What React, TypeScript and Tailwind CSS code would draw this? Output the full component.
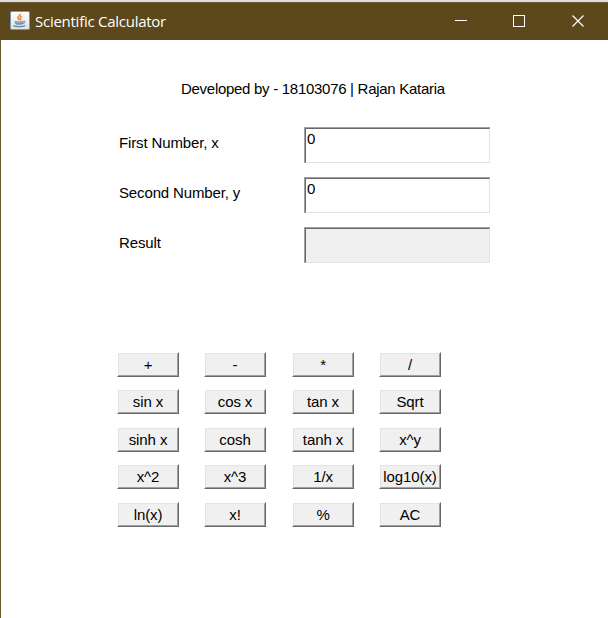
import type { ReactNode } from "react";

function JavaIcon() {
  return (
    <svg width="20" height="19" viewBox="0 0 20 19" className="block">
      <defs>
        <linearGradient id="tile" x1="0" y1="0" x2="0" y2="1">
          <stop offset="0" stopColor="#ffffff" />
          <stop offset="1" stopColor="#dce0e4" />
        </linearGradient>
      </defs>
      <rect x="0.5" y="0.5" width="19" height="18" rx="1.2" fill="url(#tile)" stroke="#8294a8" />
      <path d="M10.300 2.800c.5 1.700-2.900 2.500-2.300 4.300.3.900 1 1.200 1.300 2M12 5.300c-1.700.8-2.200 1.500-1.500 2.300.4.600.2 1.100-.2 1.600" fill="none" stroke="#e8904c" strokeWidth="1.600" />
      <path d="M4.500 10.200h9c-.2 2-.8 2.900-1.800 3.500H6.700c-1.200-.7-1.900-1.700-2.200-3.500z" fill="#7590a6" />
      <path d="M13.300 10.200c2.800-.5 2.200 2.200-.9 2.300" fill="none" stroke="#66849b" />
      <path d="M6.500 11.500h5" stroke="#b4c4d0" strokeWidth="0.800" />
      <path d="M3.300 14.500c2 1.500 9.500 1.500 12 0" fill="none" stroke="#6485a0" strokeWidth="1.400" />
    </svg>
  );
}

function TitleBar() {
  return (
    <header className="flex h-10 flex-col">
      <div className="h-[2px] bg-[#dedede]" />
      <div className="flex h-[38px] items-center border-t border-[#6b5930] bg-[#5c481a] pl-[10px] text-white">
        <div className="-mt-[3px]">
          <JavaIcon />
        </div>
        <h1 className="-mt-[2px] ml-[5px] flex-1 whitespace-nowrap font-['Open_Sans',sans-serif] text-[15px] leading-5 tracking-[-0.26px]">
          Scientific Calculator
        </h1>
        <svg width="130" height="12" viewBox="0 0 130 12" className="-mt-[2px] mr-[23px] block" fill="none" stroke="white">
          <path d="M0 5.500h12M58.500.5h11v11h-11z" shapeRendering="crispEdges" />
          <path d="M117.500.500l11 11M128.500.500l-11 11" strokeWidth="1.200" />
        </svg>
      </div>
    </header>
  );
}

function Field({ label, value, readOnly = false }: { label: string; value: string; readOnly?: boolean }) {
  return (
    <div className="flex h-[36px]">
      <label className="w-[185px] pt-[6px] leading-5 tracking-[-0.14px]">{label}</label>
      <div className="w-[186px] border-t border-l border-[#a0a0a0]">
        <div
          className={`h-full border border-t-[#696969] border-r-[#e3e3e3] border-b-[#e3e3e3] border-l-[#696969] pl-px leading-5 ${
            readOnly ? "bg-[#f0f0f0]" : "bg-white"
          }`}
        >
          {value}
        </div>
      </div>
    </div>
  );
}

function Key({ children }: { children: ReactNode }) {
  return (
    <button className="block h-[25px] w-[62px] border border-t-white border-r-[#696969] border-b-[#696969] border-l-white">
      <span className="flex h-full items-center justify-center whitespace-nowrap border border-t-[#e3e3e3] border-r-[#a0a0a0] border-b-[#a0a0a0] border-l-[#e3e3e3] bg-[#f0f0f0] leading-5 tracking-[-0.1px]">
        {children}
      </span>
    </button>
  );
}

const keyRows = [
  ["+", "-", "*", "/"],
  ["sin x", "cos x", "tan x", "Sqrt"],
  ["sinh x", "cosh", "tanh x", "x^y"],
  ["x^2", "x^3", "1/x", "log10(x)"],
  ["ln(x)", "x!", "%", "AC"],
];

export default function App() {
  return (
    <div className="flex h-[618px] w-[608px] flex-col overflow-hidden bg-white font-['Liberation_Sans',Arial,sans-serif] text-[15px] text-black">
      <TitleBar />
      <main className="flex-1 border-l border-[#6b5830]">
        <p className="ml-[180px] mt-[39px] whitespace-nowrap leading-5 tracking-[-0.285px]">Developed by - 18103076 | Rajan Kataria</p>
        <section className="ml-[118px] mt-[28px] flex flex-col gap-[14px]">
          <Field label="First Number, x" value="0" />
          <Field label="Second Number, y" value="0" />
          <Field label="Result" value="" readOnly />
        </section>
        <section className="ml-[116px] mt-[89px] grid grid-cols-[87px_88px_87px_62px] grid-rows-[37px_38px_37px_38px_25px]">
          {keyRows.flat().map((key) => (
            <Key key={key}>{key}</Key>
          ))}
        </section>
      </main>
    </div>
  );
}
